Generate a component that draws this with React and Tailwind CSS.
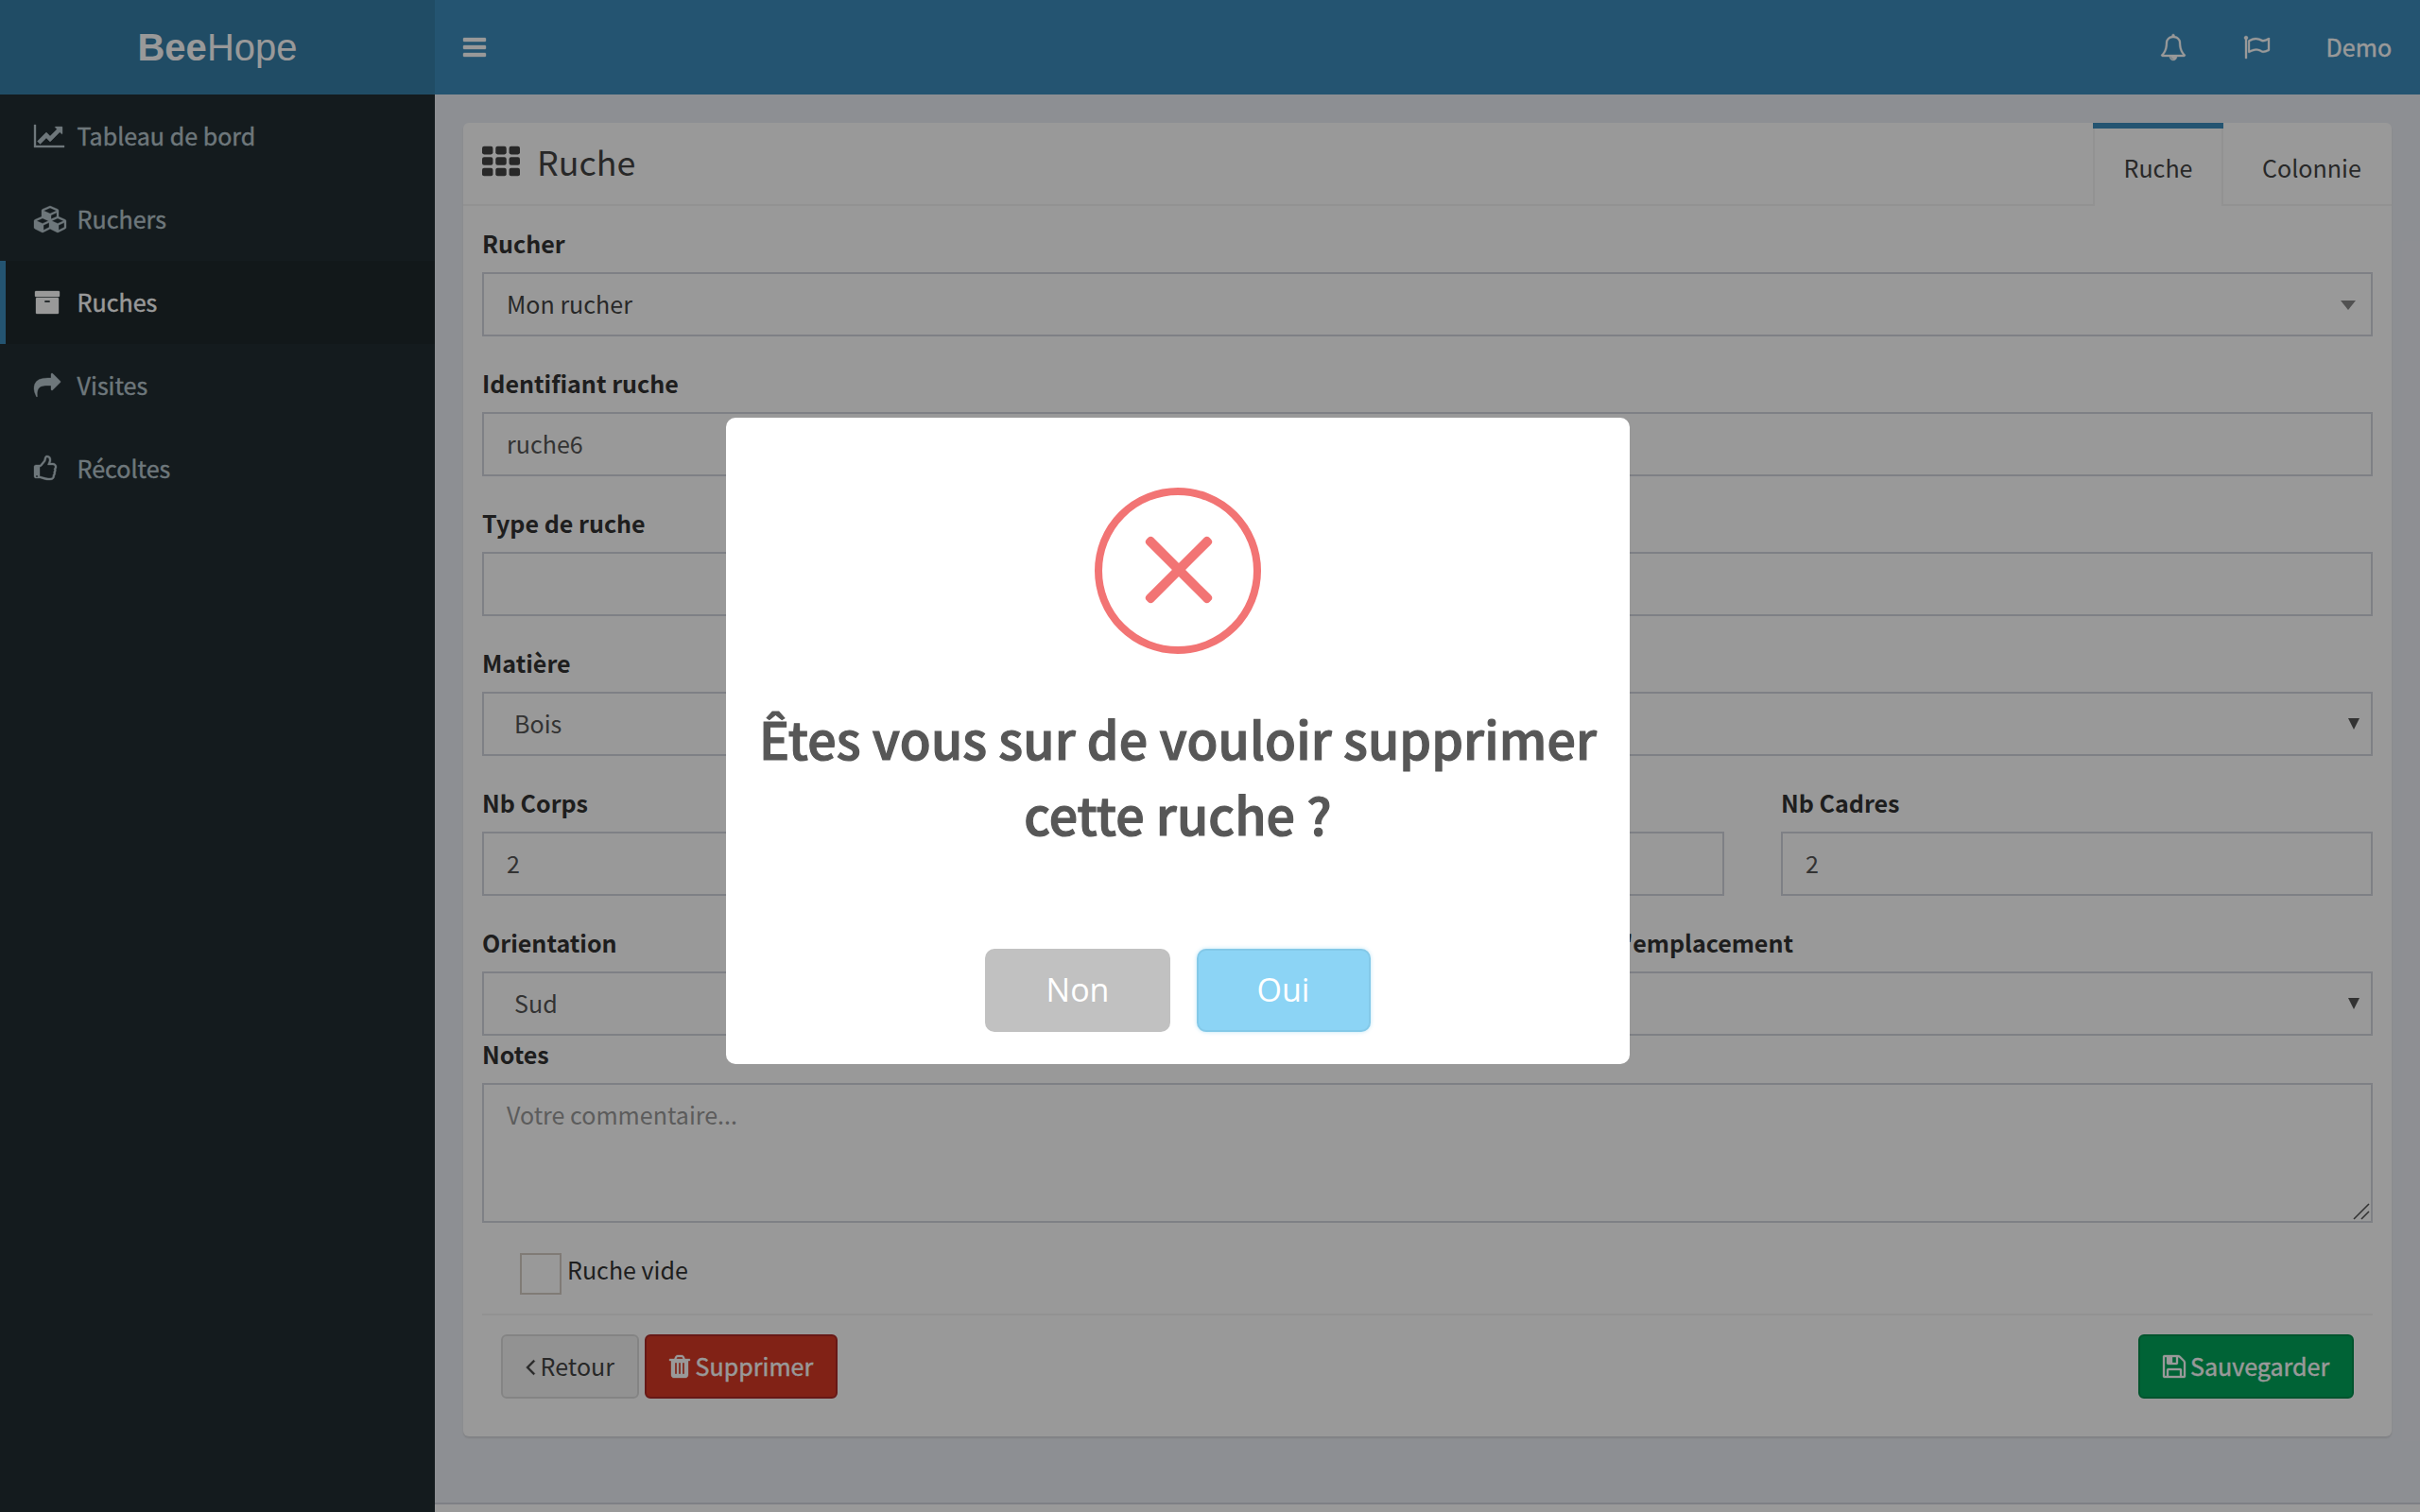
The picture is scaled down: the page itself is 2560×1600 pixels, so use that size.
import React from "react";

const ICONS = {
  bars: ["128 0 1536 1792", "M1664 1344v128q0 26-19 45t-45 19h-1408q-26 0-45-19t-19-45v-128q0-26 19-45t45-19h1408q26 0 45 19t19 45zm0-512v128q0 26-19 45t-45 19h-1408q-26 0-45-19t-19-45v-128q0-26 19-45t45-19h1408q26 0 45 19t19 45zm0-512v128q0 26-19 45t-45 19h-1408q-26 0-45-19t-19-45v-128q0-26 19-45t45-19h1408q26 0 45 19t19 45z"],
  chart: ["0 0 2048 1792", "M2048 1536v128h-2048v-1536h128v1408h1920zm-128-1248v435q0 21-19.5 29.5t-35.5-7.5l-121-121-633 633q-10 10-23 10t-23-10l-233-233-416 416-192-192 585-585q10-10 23-10t23 10l233 233 464-464-121-121q-16-16-7.5-35.5t29.5-19.5h435q14 0 23 9t9 23z"],
  cubes: ["0 0 2304 1792", "M640 1632l384-192v-314l-384 164v342zm-64-454l404-173-404-173-404 173zm1088 454l384-192v-314l-384 164v342zm-64-454l404-173-404-173-404 173zm-448-293l384-165v-266l-384 164v267zm-64-379l441-189-441-189-441 189zm1088 518v416q0 36-19 67t-52 47l-448 224q-25 14-57 14t-57-14l-448-224q-4-2-7-4-2 2-7 4l-448 224q-25 14-57 14t-57-14l-448-224q-33-16-52-47t-19-67v-416q0-38 21.5-70t56.5-48l434-186v-400q0-38 21.5-70t56.5-48l448-192q23-10 50-10t50 10l448 192q35 16 56.5 48t21.5 70v400l434 186q36 16 57 48t21 70z"],
  archive: ["0 0 1792 1792", "M1088 832q0-26-19-45t-45-19h-256q-26 0-45 19t-19 45 19 45 45 19h256q26 0 45-19t19-45zm576-192v960q0 26-19 45t-45 19h-1408q-26 0-45-19t-19-45v-960q0-26 19-45t45-19h1408q26 0 45 19t19 45zm64-448v256q0 26-19 45t-45 19h-1536q-26 0-45-19t-19-45v-256q0-26 19-45t45-19h1536q26 0 45 19t19 45z"],
  share: ["0 0 1792 1792", "M1792 640q0 26-19 45l-512 512q-19 19-45 19t-45-19-19-45v-256h-224q-98 0-175.5 6t-154 21.5-133 42.5-105.5 69.5-80 101-48.5 138.5-17.5 181q0 55 5 123 0 6 2.5 23.5t2.5 26.5q0 15-8.5 25t-23.5 10q-16 0-28-17-7-9-13-22t-13.5-30-10.5-24q-127-285-127-451 0-199 53-333 162-403 875-403h224v-256q0-26 19-45t45-19 45 19l512 512q19 19 19 45z"],
  thumb: ["128 0 1536 1792", "M384 1408q0-26-19-45t-45-19-45 19-19 45 19 45 45 19 45-19 19-45zm1152-640q0-51-39-89.5t-89-38.5h-352q0-58 48-159.5t48-160.5q0-98-32-145t-128-47q-26 26-38 85t-30.5 125.5-59.5 109.5q-22 23-77 91-4 5-23 30t-31.5 41-34.5 42.5-40 44-38.5 35.5-40 27-35.5 9h-32v640h32q13 0 31.5 3t33 6.5 38 11 35 11.5 35.5 12.5 29 10.5q211 73 342 73h121q192 0 192-167 0-26-5-56 30-16 47.5-52.5t17.5-73.5-18-69q53-50 53-119 0-25-10-55.5t-25-47.5q32-1 53.5-47t21.5-81zm128-1q0 89-49 163 9 33 9 69 0 77-38 144 3 21 3 43 0 101-60 178 1 139-85 219.5t-227 80.5h-129q-96 0-189.5-22.5t-216.5-65.5q-116-40-138-40h-288q-53 0-90.5-37.5t-37.5-90.5v-640q0-53 37.5-90.5t90.5-37.5h274q36-24 137-155 58-75 107-128 24-25 35.5-85.5t30.5-126.5 62-108q39-37 90-37 84 0 151 32.5t102 101.5 35 186q0 93-48 192h176q104 0 180 76t76 179z"],
  bell: ["0 0 1792 1792", "M912 1696q0-16-16-16-59 0-101.5-42.5t-42.5-101.5q0-16-16-16t-16 16q0 73 51.5 124.5t124.5 51.5q16 0 16-16zm-666-288h1300q-266-300-266-832 0-51-24-105t-69-103-121.5-80.5-169.5-31.5-169.5 31.5-121.5 80.5-69 103-24 105q0 532-266 832zm1482 0q0 52-38 90t-90 38h-448q0 106-75 181t-181 75-181-75-75-181h-448q-52 0-90-38t-38-90q50-42 91-88t85-119.5 74.5-158.5 50-206 19.5-260q0-152 117-282.5t307-158.5q-8-19-8-39 0-40 28-68t68-28 68 28 28 68q0 20-8 39 190 28 307 158.5t117 282.5q0 139 19.5 260t50 206 74.5 158.5 85 119.5 91 88z"],
  flag: ["0 0 1792 1792", "M1664 1045v-616q-169 91-306 91-82 0-145-32-100-49-184-76.5t-178-27.5q-173 0-403 127v599q245-113 433-113 55 0 103.5 7.5t98 26 77 31 82.5 39.5l28 14q44 22 101 22 120 0 293-92zm-1344-789q0 35-17.5 64t-46.5 46v1266q0 14-9 23t-23 9h-64q-14 0-23-9t-9-23v-1266q-29-17-46.5-46t-17.5-64q0-53 37.5-90.5t90.5-37.5 90.5 37.5 37.5 90.5zm1472 64v763q0 39-35 57l-10 5q-218 116-369 116-88 0-158-35l-28-14q-64-33-99-48t-91-29-114-14q-102 0-235.5 44t-228.5 102q-15 9-33 9-16 0-32-8-32-19-32-56v-742q0-35 31-55 35-21 78.5-42.5t114-52 152.5-49.5 155-19q112 0 209 31t209 86q38 19 89 19 122 0 310-112 22-12 31-17 31-16 62 2 31 20 31 55z"],
  trash: ["192 0 1408 1792", "M704 1376v-704q0-14-9-23t-23-9h-64q-14 0-23 9t-9 23v704q0 14 9 23t23 9h64q14 0 23-9t9-23zm256 0v-704q0-14-9-23t-23-9h-64q-14 0-23 9t-9 23v704q0 14 9 23t23 9h64q14 0 23-9t9-23zm256 0v-704q0-14-9-23t-23-9h-64q-14 0-23 9t-9 23v704q0 14 9 23t23 9h64q14 0 23-9t9-23zm-544-992h448l-48-117q-7-9-17-11h-317q-10 2-17 11zm928 32v64q0 14-9 23t-23 9h-96v948q0 83-47 143.5t-113 60.5h-832q-66 0-113-58.5t-47-141.5v-952h-96q-14 0-23-9t-9-23v-64q0-14 9-23t23-9h309l70-167q15-37 54-63t79-26h320q40 0 79 26t54 63l70 167h309q14 0 23 9t9 23z"],
  floppy: ["128 0 1536 1792", "M512 1536h768v-384h-768v384zm896 0h128v-896q0-14-10-38.5t-20-34.5l-281-281q-10-10-34-20t-39-10v416q0 40-28 68t-68 28h-576q-40 0-68-28t-28-68v-416h-128v1280h128v-416q0-40 28-68t68-28h832q40 0 68 28t28 68v416zm-384-928v-320q0-13-9.5-22.5t-22.5-9.5h-192q-13 0-22.5 9.5t-9.5 22.5v320q0 13 9.5 22.5t22.5 9.5h192q13 0 22.5-9.5t9.5-22.5zm640 32v928q0 40-28 68t-68 28h-1344q-40 0-68-28t-28-68v-1344q0-40 28-68t68-28h928q40 0 88 20t76 48l280 280q28 28 48 76t20 88z"],
  angle: ["576 0 640 1792", "M1203 544q0 13-10 23l-393 393 393 393q10 10 10 23t-10 23l-50 50q-10 10-23 10t-23-10l-466-466q-10-10-10-23t10-23l466-466q10-10 23-10t23 10l50 50q10 10 10 23z"],
};

function Icon({ name, className = "" }) {
  const [viewBox, d] = ICONS[name];
  return (
    <svg viewBox={viewBox} fill="currentColor" stroke="currentColor" strokeWidth="22" className={`h-[28px] shrink-0 overflow-visible ${className}`}>
      <path d={d} />
    </svg>
  );
}

function GridIcon() {
  return (
    <svg viewBox="0 0 1792 1792" fill="currentColor" className="size-[40px] shrink-0">
      {[128, 640, 1152].map((y) =>
        [0, 640, 1280].map((x) => <rect key={`${x}-${y}`} x={x} y={y} width="512" height="384" rx="96" />)
      )}
    </svg>
  );
}

const NAV = [
  { icon: "chart", w: "w-[32px]", label: "Tableau de bord" },
  { icon: "cubes", w: "w-[36px]", label: "Ruchers" },
  { icon: "archive", w: "w-[28px]", label: "Ruches", active: true },
  { icon: "share", w: "w-[28px]", label: "Visites" },
  { icon: "thumb", w: "w-[24px]", label: "Récoltes" },
];

function Sidebar() {
  return (
    <nav className="flex w-[460px] shrink-0 flex-col bg-[#222d32]">
      {NAV.map((item) => (
        <a
          key={item.label}
          className={`flex h-[88px] items-center border-l-[6px] pl-[30px] ${
            item.active ? "border-[#3c8dbc] bg-[#1e282c] text-white" : "border-transparent text-[#b8c7ce]"
          }`}
        >
          <span className="flex w-[45.6px] shrink-0">
            <Icon name={item.icon} className={item.w} />
          </span>
          <span className="pb-[2px] [-webkit-text-stroke:0.4px_currentColor]">{item.label}</span>
        </a>
      ))}
    </nav>
  );
}

function Label({ children, className = "" }) {
  return <label className={`mb-[10px] block h-[40px] font-bold leading-[38px] whitespace-nowrap ${className}`}>{children}</label>;
}

function Field({ label, value, kind = "input", labelClass = "" }) {
  return (
    <div className="min-w-0">
      <Label className={labelClass}>{label}</Label>
      <div
        className={`flex h-[68px] items-center justify-between border-2 border-[#d2d5de] bg-white ${
          kind === "select" ? "pl-[32px] pr-[12px] text-[#555]" : kind === "select2" ? "pl-[24px] pr-[16px] text-[#444]" : "px-[24px] text-[#555]"
        }`}
      >
        <span className="pb-[2px]">{value}</span>
        {kind === "select" && (
          <svg viewBox="0 0 12 12" className="mb-[1px] size-[12px] text-[#555]" fill="currentColor">
            <path d="M0 0H12L6 12Z" />
          </svg>
        )}
        {kind === "select2" && (
          <svg viewBox="0 0 16 10" className="mt-[2px] h-[10px] w-[16px] text-[#888]" fill="currentColor">
            <path d="M0 0H16L8 10Z" />
          </svg>
        )}
      </div>
    </div>
  );
}

function BoxHeader() {
  return (
    <div className="flex h-[88px] justify-between border-b-2 border-[#f4f4f4] text-[#444]">
      <div className="flex pl-[20px] pt-[21px]">
        <div className="pt-[0.6px]">
          <GridIcon />
        </div>
        <h3 className="ml-[18px] mt-[-1px] text-[35.8px] leading-[40px]">Ruche</h3>
      </div>
      <div className="flex">
        <div className="mb-[-2px] flex w-[138px] flex-col border-t-[6px] border-[#3c8dbc] bg-white">
          <div className="flex flex-1 items-center justify-center border-x-2 border-[#f4f4f4]">Ruche</div>
        </div>
        <div className="flex w-[178px] items-center pl-[41px] pt-[8px]">Colonnie</div>
      </div>
    </div>
  );
}

function Form() {
  return (
    <div className="flex flex-col px-[20px] pt-[20px]">
      <div className="flex flex-col gap-[30px]">
        <Field label="Rucher" value="Mon rucher" kind="select2" />
        <Field label="Identifiant ruche" value="ruche6" />
        <Field label="Type de ruche" value="" />
        <Field label="Matière" value="Bois" kind="select" />
        <div className="grid grid-cols-[627px_627px_626px] gap-[60px]">
          <Field label="Nb Corps" value="2" />
          <Field label="" value="" />
          <Field label="Nb Cadres" value="2" />
        </div>
        <div className="grid grid-cols-2 gap-[60px]">
          <Field label="Orientation" value="Sud" kind="select" />
          <Field label="l'emplacement" value="" kind="select" labelClass="w-[357px] text-right" />
        </div>
      </div>
      <Label>Notes</Label>
      <div className="flex h-[148px] items-stretch justify-between border-2 border-[#d2d5de] bg-white pl-[24px] pt-[12px] text-[#999]">
        <span className="leading-[38px]">Votre commentaire...</span>
        <svg viewBox="0 0 18 18" className="mb-[1px] mr-[1px] size-[18px] self-end text-[#555]" stroke="currentColor" strokeWidth="1.6" fill="none">
          <path d="M1 17L17 1M9 17L17 9" />
        </svg>
      </div>
      <div className="mt-[32px] flex h-[64px] pl-[40px]">
        <span className="size-[44px] border-2 border-[#d5cec5] bg-white" />
        <span className="ml-[6px] h-[40px] leading-[34px]">Ruche vide</span>
      </div>
      <div className="flex justify-between border-t-2 border-[#f4f4f4] px-[20px] pt-[20px]">
        <div className="flex gap-[6px]">
          <button className="flex h-[68px] w-[146px] items-center rounded-[6px] border-2 border-[#ddd] bg-[#f4f4f4] pl-[24px] text-[#444]">
            <Icon name="angle" className="w-[10px]" />
            <span className="ml-[5.6px] pb-[2px]">Retour</span>
          </button>
          <button className="flex h-[68px] w-[204px] items-center rounded-[6px] border-2 border-[#ac2925] bg-[#d73925] pl-[24px] text-white">
            <Icon name="trash" className="w-[22px]" />
            <span className="ml-[5.6px] pb-[2px] [-webkit-text-stroke:0.4px_currentColor]">Supprimer</span>
          </button>
        </div>
        <button className="flex h-[68px] w-[228px] items-center rounded-[6px] border-2 border-[#008d4c] bg-[#00a65a] pl-[24px] text-white">
          <Icon name="floppy" className="w-[24px]" />
          <span className="ml-[5px] pb-[2px] [-webkit-text-stroke:0.4px_currentColor]">Sauvegarder</span>
        </button>
      </div>
    </div>
  );
}

function ConfirmDialog() {
  return (
    <div className="absolute left-[768px] top-[442px] flex h-[684px] w-[956px] flex-col items-center rounded-[10px] bg-white pt-[74px]">
      <svg viewBox="0 0 176 176" className="size-[176px] shrink-0" fill="#f27474">
        <circle cx="88" cy="88" r="84" fill="none" stroke="#f27474" strokeWidth="8" />
        <rect x="42" y="82" width="94" height="10" rx="4" transform="rotate(45 89 87)" />
        <rect x="42" y="82" width="94" height="10" rx="4" transform="rotate(-45 89 87)" />
      </svg>
      <h2 className="mt-[49px] text-center text-[53.7px] font-medium leading-[80px] tracking-[0.1px] whitespace-nowrap text-[#575757] [-webkit-text-stroke:1.2px_#575757]">
        Êtes vous sur de vouloir supprimer
        <br />
        cette ruche ?
      </h2>
      <div className="mt-[103px] flex gap-[28px] font-['Open_Sans',sans-serif] text-[34px] leading-[46px] text-white">
        <button className="flex h-[88px] w-[196px] items-center justify-center rounded-[10px] bg-[#c1c1c1] pb-[2px]">Non</button>
        <button className="flex h-[88px] w-[184px] items-center justify-center rounded-[10px] bg-[#8cd4f5] pb-[2px] pr-[1px] shadow-[0_0_4px_rgba(174,222,244,0.8),inset_0_0_0_2px_rgba(0,0,0,0.05)]">
          Oui
        </button>
      </div>
    </div>
  );
}

export default function App() {
  return (
    <div className="relative flex h-[1600px] w-[2560px] flex-col overflow-hidden bg-[#eceff5] font-['Noto_Sans_CJK_SC',sans-serif] text-[25.06px] leading-[40px] text-[#333]">
      <header className="flex h-[100px] shrink-0 text-white">
        <div className="w-[460px] bg-[#367fa9] text-center font-['Liberation_Sans',Arial,sans-serif] text-[40px] leading-[100px]">
          <b>Bee</b>Hope
        </div>
        <div className="flex flex-1 items-center bg-[#3c8dbc] px-[30px]">
          <Icon name="bars" className="w-[24px]" />
          <div className="ml-auto flex items-center gap-[60px]">
            <Icon name="bell" className="w-[28px]" />
            <Icon name="flag" className="w-[28px]" />
            <span className="w-[69.4px] pb-[2px] [-webkit-text-stroke:0.4px_currentColor]">Demo</span>
          </div>
        </div>
      </header>
      <div className="flex flex-1">
        <Sidebar />
        <main className="flex flex-1 flex-col">
          <section className="mx-[30px] mt-[30px] h-[1390px] rounded-[6px] bg-white shadow-[0_2px_2px_rgba(0,0,0,0.1)]">
            <BoxHeader />
            <Form />
          </section>
          <footer className="mt-auto h-[10px] border-t-2 border-[#d2d5de] bg-white" />
        </main>
      </div>
      <div className="absolute inset-0 bg-black/40" />
      <ConfirmDialog />
    </div>
  );
}
